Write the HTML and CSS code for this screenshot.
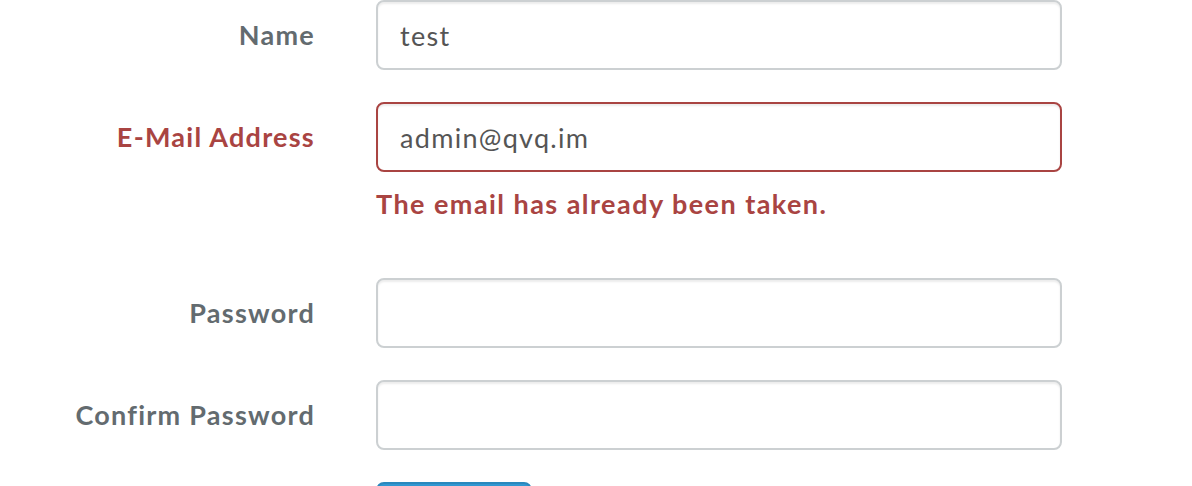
FILE: index.html
```html
<!DOCTYPE html>
<html>
<head>
<meta charset="utf-8">
<link rel="stylesheet" href="styles.css">
</head>
<body>
<form class="form">
  <div class="group">
    <label class="label">Name</label>
    <div class="field"><input class="input" type="text" value="test"></div>
  </div>
  <div class="group has-error">
    <label class="label">E-Mail Address</label>
    <div class="field">
      <input class="input" type="email" value="admin@qvq.im">
      <span class="help">The email has already been taken.</span>
    </div>
  </div>
  <div class="group">
    <label class="label">Password</label>
    <div class="field"><input class="input" type="password"></div>
  </div>
  <div class="group">
    <label class="label">Confirm Password</label>
    <div class="field"><input class="input" type="password"></div>
  </div>
  <div class="group">
    <span class="label"></span>
    <div class="field"><button class="btn" type="submit">Register</button></div>
  </div>
</form>
</body>
</html>
```
FILE: styles.css
```css
html, body {
  margin: 0;
  padding: 0;
  background: #ffffff;
  overflow: hidden;
}
body {
  font-family: Lato, "Open Sans", sans-serif;
  color: #636b6f;
}
.form {
  display: flex;
  flex-direction: column;
  gap: 32px;
}
.group {
  display: flex;
  align-items: flex-start;
  gap: 61px;
}
.label {
  width: 315px;
  flex: none;
  text-align: right;
  font-size: 27px;
  font-weight: 700;
  letter-spacing: 1.25px;
  line-height: 70px;
  color: #636b6f;
}
.has-error .label {
  color: #a94442;
}
.field {
  width: 686px;
  display: flex;
  flex-direction: column;
}
.input {
  box-sizing: border-box;
  width: 686px;
  height: 70px;
  margin: 0;
  padding: 0 22px;
  border: 2px solid #ccd0d2;
  border-radius: 8px;
  box-shadow: inset 0 2px 2px rgba(0,0,0,0.075);
  font-family: inherit;
  font-size: 27px;
  letter-spacing: 1.3px;
  color: #555555;
  background: #fff;
  outline: none;
}
.has-error .input {
  border-color: #a94442;
}
.help {
  margin-top: 10px;
  margin-bottom: 20px;
  line-height: 44px;
  font-size: 27px;
  font-weight: 700;
  letter-spacing: 1.45px;
  color: #a94442;
}
.btn {
  width: 156px;
  height: 70px;
  border: 2px solid #2a88bd;
  border-radius: 8px;
  background: #3097d1;
  color: #fff;
  font-family: inherit;
  font-size: 27px;
  padding: 0;
}
```
